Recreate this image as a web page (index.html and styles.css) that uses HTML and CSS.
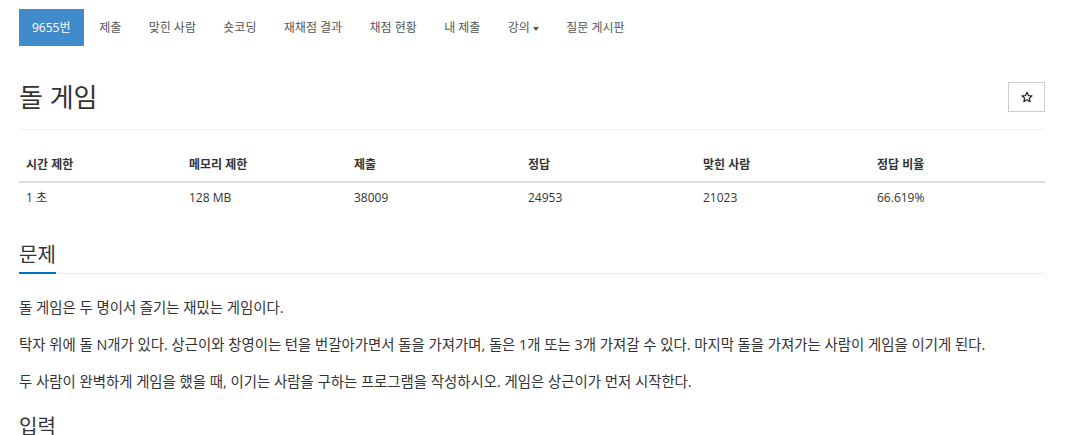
FILE: index.html
```html
<!DOCTYPE html>
<html lang="ko">
<head>
<meta charset="utf-8">
<title>돌 게임</title>
<link rel="stylesheet" href="styles.css">
</head>
<body>
<div class="container">
  <ul class="nav">
    <li class="nav-item active">9655번</li>
    <li class="nav-item">제출</li>
    <li class="nav-item">맞힌 사람</li>
    <li class="nav-item">숏코딩</li>
    <li class="nav-item">재채점 결과</li>
    <li class="nav-item">채점 현황</li>
    <li class="nav-item">내 제출</li>
    <li class="nav-item">강의<span class="caret"></span></li>
    <li class="nav-item">질문 게시판</li>
  </ul>

  <div class="page-header">
    <h1 class="title">돌 게임</h1>
    <button class="star-btn" type="button" aria-label="즐겨찾기">
      <svg width="12" height="12" viewBox="0 0 24 24"><path d="M12 2.5l2.9 6.6 7.1.6-5.4 4.7 1.6 7-6.2-3.7-6.2 3.7 1.6-7L2 9.7l7.1-.6z" fill="none" stroke="#222" stroke-width="2.4" stroke-linejoin="round"/></svg>
    </button>
  </div>

  <table class="info">
    <thead>
      <tr>
        <th class="c1">시간 제한</th>
        <th class="c2">메모리 제한</th>
        <th class="c3">제출</th>
        <th class="c4">정답</th>
        <th class="c5">맞힌 사람</th>
        <th class="c6">정답 비율</th>
      </tr>
    </thead>
    <tbody>
      <tr>
        <td>1 초</td>
        <td>128 MB</td>
        <td>38009</td>
        <td>24953</td>
        <td>21023</td>
        <td>66.619%</td>
      </tr>
    </tbody>
  </table>

  <section class="problem-section">
    <h2 class="section-head"><span class="section-title">문제</span></h2>
    <div class="problem-text">
      <p>돌 게임은 두 명이서 즐기는 재밌는 게임이다.</p>
      <p>탁자 위에 돌 N개가 있다. 상근이와 창영이는 턴을 번갈아가면서 돌을 가져가며, 돌은 1개 또는 3개 가져갈 수 있다. 마지막 돌을 가져가는 사람이 게임을 이기게 된다.</p>
      <p>두 사람이 완벽하게 게임을 했을 때, 이기는 사람을 구하는 프로그램을 작성하시오. 게임은 상근이가 먼저 시작한다.</p>
    </div>
  </section>

  <section class="problem-section next">
    <h2 class="section-head"><span class="section-title">입력</span></h2>
  </section>
</div>
</body>
</html>
```
FILE: styles.css
```css
* { box-sizing: border-box; }
html, body { margin: 0; padding: 0; background: #fff; }
body {
  font-family: "Open Sans", "Noto Sans CJK KR", sans-serif;
  color: #333;
  font-size: 14px;
  overflow: hidden;
}
.container {
  width: 1026px;
  margin-left: 19px;
}
.nav {
  list-style: none;
  margin: 9px 0 0;
  padding: 0;
  display: flex;
}
.nav-item {
  height: 37px;
  line-height: 37px;
  padding: 0 13.7px;
  font-size: 12px;
  color: #555;
  white-space: nowrap;
}
.nav-item.active {
  background: #428bca;
  color: #fff;
  padding: 0 13px;
  margin-right: 2px;
}
.caret {
  display: inline-block;
  width: 0;
  height: 0;
  margin-left: 3px;
  vertical-align: middle;
  border-top: 4px solid #555;
  border-left: 3px solid transparent;
  border-right: 3px solid transparent;
}
.page-header {
  margin-top: 36px;
  padding-bottom: 17px;
  border-bottom: 1px solid #eee;
  display: flex;
  justify-content: space-between;
  align-items: flex-start;
}
.title {
  margin: 0;
  font-size: 26px;
  line-height: 30px;
  font-weight: 400;
  color: #333;
}
.star-btn {
  width: 37px;
  height: 30px;
  border: 1px solid #ccc;
  background: #fff;
  padding: 0;
  display: flex;
  align-items: center;
  justify-content: center;
}
.info {
  width: 100%;
  margin-top: 18px;
  border-collapse: collapse;
  font-size: 12px;
}
.info th {
  text-align: left;
  font-weight: 700;
  padding: 8px 7px;
  line-height: 17px;
  border-bottom: 2px solid #ddd;
}
.info td {
  padding: 6px 7px 8px;
  line-height: 17px;
}
.c1 { width: 163px; }
.c2 { width: 165px; }
.c3 { width: 174px; }
.c4 { width: 175px; }
.c5 { width: 174px; }
.c6 { width: 175px; }
.problem-section { margin-top: 29px; }
.problem-section.next { margin-top: 22px; }
.section-head {
  margin: 0;
  font-size: 20px;
  line-height: 24px;
  font-weight: 400;
  border-bottom: 1px dotted #e0e0e0;
}
.section-title {
  display: inline-block;
  padding-bottom: 5px;
  border-bottom: 2px solid #0076c0;
  margin-bottom: -1px;
}
.problem-text { margin-top: 23px; }
.problem-text p {
  margin: 0 0 15px;
  line-height: 22px;
  font-size: 14.4px;
}
```
